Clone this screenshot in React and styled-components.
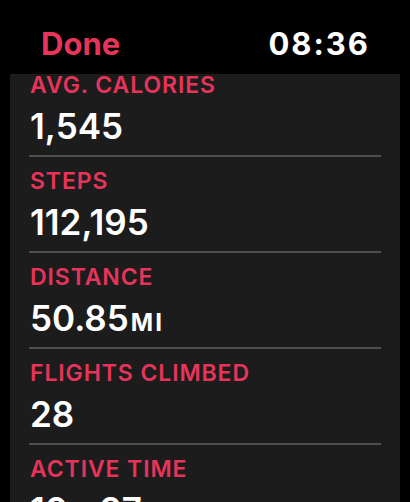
import React from 'react';
import styled, { createGlobalStyle } from 'styled-components';

const GlobalStyle = createGlobalStyle`
  html, body {
    margin: 0;
    padding: 0;
    background: #000;
  }

  body {
    font-family: Inter, "Liberation Sans", Arial, sans-serif;
    -webkit-font-smoothing: antialiased;
  }
`;

const Screen = styled.div`
  display: flex;
  flex-direction: column;
  height: 100vh;
  background: #000;
  overflow: hidden;
`;

const TopBar = styled.header`
  display: flex;
  justify-content: space-between;
  align-items: center;
  height: 74px;
  padding: 24px 40px 10px 41px;
  box-sizing: border-box;
  flex-shrink: 0;
`;

const DoneButton = styled.button`
  border: 0;
  padding: 0;
  background: transparent;
  font-family: inherit;
  font-size: 31px;
  line-height: 40px;
  font-weight: 700;
  color: #e6345a;
`;

const Clock = styled.span`
  font-size: 31px;
  line-height: 40px;
  font-weight: 700;
  letter-spacing: 2px;
  color: #fff;
`;

const Panel = styled.section`
  flex: 1;
  margin: 0 10px;
  background: #1c1c1c;
  overflow: hidden;
`;

const StatList = styled.ul`
  list-style: none;
  margin: -13px 0 0;
  padding: 0;
`;

const StatRow = styled.li`
  display: flex;
  flex-direction: column;
  gap: 7px;
  margin: 0 19px;
  padding: 10px 0 9px 1px;
  border-bottom: 2px solid #505050;
`;

const Label = styled.span`
  font-size: 23px;
  line-height: 28px;
  font-weight: 600;
  letter-spacing: 0.9px;
  color: #e6345a;
  text-transform: uppercase;
`;

const Value = styled.span`
  display: block;
  height: 40px;
  font-size: 35px;
  line-height: 40px;
  font-weight: 600;
  color: #fff;
`;

const Unit = styled.span`
  font-size: 24px;
  line-height: 1;
  font-weight: 700;
  letter-spacing: 2px;
  margin: 0 ${(p) => (p.$gap ? '10px' : '0')} 0 2px;
`;

const stats = [
  { label: 'Avg. Calories', value: [['1,545']] },
  { label: 'Steps', value: [['112,195']] },
  { label: 'Distance', value: [['50.85', 'MI']] },
  { label: 'Flights Climbed', value: [['28']] },
  { label: 'Active Time', value: [['10', 'H'], ['27', 'M']] },
];

function App() {
  return (
    <>
      <GlobalStyle />
      <Screen>
        <TopBar>
          <DoneButton type="button">Done</DoneButton>
          <Clock>08:36</Clock>
        </TopBar>
        <Panel>
          <StatList>
            {stats.map((stat) => (
              <StatRow key={stat.label}>
                <Label>{stat.label}</Label>
                <Value>
                  {stat.value.map(([num, unit], i) => (
                    <React.Fragment key={num}>
                      {num}
                      {unit ? <Unit $gap={i < stat.value.length - 1}>{unit}</Unit> : null}
                    </React.Fragment>
                  ))}
                </Value>
              </StatRow>
            ))}
          </StatList>
        </Panel>
      </Screen>
    </>
  );
}

export default App;
